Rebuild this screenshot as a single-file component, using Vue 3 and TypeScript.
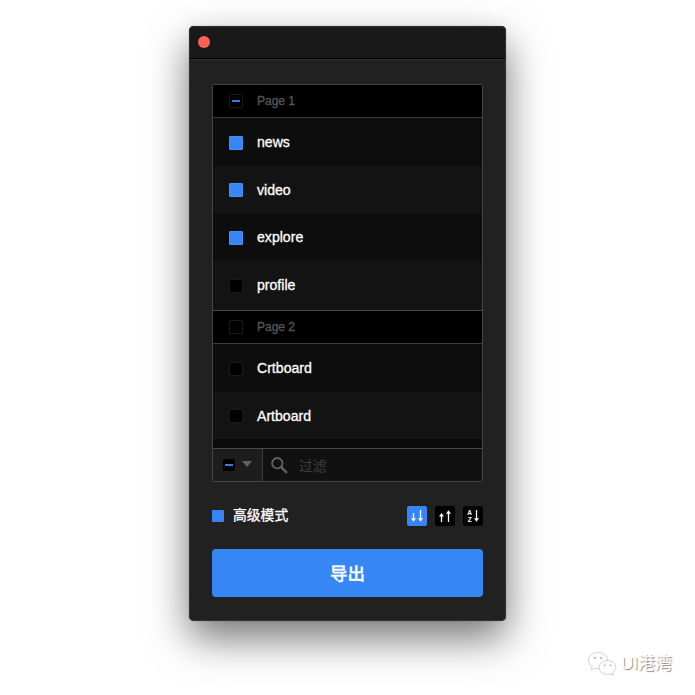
<script setup lang="ts">
import { ref } from 'vue'

type CheckState = 'on' | 'off' | 'mixed'
interface Item { name: string; state: CheckState }
interface Group { name: string; state: CheckState; items: Item[] }

const groups = ref<Group[]>([
  {
    name: 'Page 1',
    state: 'mixed',
    items: [
      { name: 'news', state: 'on' },
      { name: 'video', state: 'on' },
      { name: 'explore', state: 'on' },
      { name: 'profile', state: 'off' },
    ],
  },
  {
    name: 'Page 2',
    state: 'off',
    items: [
      { name: 'Crtboard', state: 'off' },
      { name: 'Artboard', state: 'off' },
    ],
  },
])

const sort = ref<'down' | 'up' | 'az'>('down')

function toggle(item: Item) {
  item.state = item.state === 'on' ? 'off' : 'on'
}
</script>

<template>
  <main class="stage">
    <section class="window">
      <header class="titlebar"><span class="close"></span></header>
      <div class="content">
        <div class="panel">
          <div class="list">
            <div v-for="group in groups" :key="group.name" class="group">
              <div class="group-head">
                <span class="check" :class="group.state"></span>
                <span class="group-name">{{ group.name }}</span>
              </div>
              <div v-for="item in group.items" :key="item.name" class="row" @click="toggle(item)">
                <span class="check" :class="item.state"></span>
                <span class="name">{{ item.name }}</span>
              </div>
            </div>
            <div class="row-peek"></div>
          </div>
          <div class="filter">
            <div class="select-all">
              <span class="check small mixed"></span>
              <svg class="caret" width="10" height="6" viewBox="0 0 10 6"><path d="M0 0h10L5 6z" fill="#626262" /></svg>
            </div>
            <div class="search">
              <svg class="lens" width="17" height="17" viewBox="0 0 17 17" fill="none" stroke="#626262">
                <circle cx="6.300" cy="6.200" r="5.200" stroke-width="1.800" />
                <path d="M10 9.900l6 6" stroke-width="2.200" />
              </svg>
              <span class="placeholder">过滤</span>
            </div>
          </div>
        </div>
        <div class="options">
          <span class="mode-check"></span>
          <span class="mode">高级模式</span>
          <div class="sorts">
            <button class="sort" :class="{ active: sort === 'down' }" @click="sort = 'down'">
              <svg width="20" height="20" viewBox="0 0 20 20" fill="none" stroke="#fff" stroke-width="1.3">
                <path d="M6.500 7v7M13.500 4v10" />
                <path d="M4 12.300h5l-2.500 3.500zM11 12.300h5l-2.500 3.500z" fill="#fff" stroke="none" />
              </svg>
            </button>
            <button class="sort" :class="{ active: sort === 'up' }" @click="sort = 'up'">
              <svg width="20" height="20" viewBox="0 0 20 20" fill="none" stroke="#fff" stroke-width="1.3">
                <path d="M6.500 9v7M13.500 6v10" />
                <path d="M4 10.500h5l-2.500-3.500zM11 7.700h5l-2.500-3.500z" fill="#fff" stroke="none" />
              </svg>
            </button>
            <button class="sort" :class="{ active: sort === 'az' }" @click="sort = 'az'">
              <svg width="20" height="20" viewBox="0 0 20 20" fill="none" stroke="#fff" stroke-width="1.3">
                <text class="az" x="6.700" y="9.200">A</text>
                <text class="az" x="6.700" y="15.600">Z</text>
                <path d="M13.500 4v10" />
                <path d="M11 12.300h5l-2.500 3.500z" fill="#fff" stroke="none" />
              </svg>
            </button>
          </div>
        </div>
        <button class="export">导出</button>
      </div>
    </section>
    <div class="watermark">
      <svg width="31" height="26" viewBox="0 0 31 26">
        <g fill="#fff" stroke="#b4b4b4" stroke-width=".6">
          <path d="M11 1.500C5.500 1.500 1.500 5 1.500 9.500c0 2.700 1.400 4.900 3.700 6.400L4.200 19l3.700-1.900c1 .3 2 .4 3.100.4 5.500 0 9.800-3.500 9.800-8S16.500 1.500 11 1.500z" />
          <path d="M20.500 9.500c-4.800 0-8.400 3-8.400 6.900s3.600 6.900 8.400 6.900c1 0 1.900-.1 2.700-.4l3.100 1.600-.8-2.700c1.900-1.300 3.300-3.200 3.300-5.400 0-3.900-3.600-6.900-8.300-6.900z" />
        </g>
        <g fill="#aaa">
          <circle cx="7.800" cy="7" r="1" /><circle cx="14" cy="7" r="1" />
          <circle cx="17.800" cy="14.300" r=".9" /><circle cx="23.300" cy="14.300" r=".9" />
        </g>
      </svg>
      <span>UI港湾</span>
    </div>
  </main>
</template>

<style>
body {
  margin: 0;
  background: #fff;
}
</style>

<style scoped>
.stage {
  position: relative;
  box-sizing: border-box;
  width: 695px;
  height: 695px;
  padding: 26px 0 0 189px;
  overflow: hidden;
  background: #fff;
  font-family: "Liberation Sans", "Noto Sans CJK SC", sans-serif;
}
.window {
  box-sizing: border-box;
  width: 317px;
  height: 595px;
  border-radius: 5px;
  background: #212121;
  box-shadow: 0 0 1px rgba(0, 0, 0, .7), 0 17px 40px rgba(0, 0, 0, .55), inset 0 0 0 1px #353535;
}
.titlebar {
  display: flex;
  align-items: center;
  box-sizing: border-box;
  height: 33px;
  padding: 0 8px 1px;
  border: 1px solid #303030;
  border-bottom-color: #050505;
  border-radius: 5px 5px 0 0;
  background: #191919;
  box-shadow: 0 1px 0 #303030;
}
.close {
  width: 12px;
  height: 12px;
  border-radius: 50%;
  background: #fe5f57;
}
.content {
  display: flex;
  flex-direction: column;
  padding: 25px 23px 0;
}
.panel {
  box-sizing: border-box;
  height: 398px;
  border: 1px solid #444;
  border-radius: 2px;
  overflow: hidden;
  background: #111;
}
.list {
  height: 363px;
  overflow: hidden;
}
.group-head,
.row {
  display: flex;
  align-items: center;
  box-sizing: border-box;
  gap: 14px;
  padding-left: 16px;
}
.group-head {
  height: 33px;
  border-bottom: 1px solid #3c3c3c;
  background: #000;
}
.group + .group .group-head {
  height: 34px;
  border-top: 1px solid #4a4a4a;
}
.row {
  height: 47.6px;
  background: #0d0d0d;
  padding-top: 2px;
}
.row:nth-child(odd) {
  background: #131313;
}
.row-peek {
  height: 10px;
  background: #0b0b0b;
}
.group:first-child .row:last-child {
  height: 49.2px;
  padding-bottom: 1.6px;
}
.name {
  color: #fff;
  font-size: 14.1px;
  line-height: 18px;
  margin-top: -1px;
  -webkit-text-stroke: .3px #fff;
}
.group-name {
  color: #555;
  font-size: 12px;
  line-height: 18px;
  -webkit-text-stroke: .35px #555;
}
.check {
  display: flex;
  align-items: center;
  justify-content: center;
  box-sizing: border-box;
  width: 14px;
  height: 14px;
  border: 1px solid #1a1a1a;
  border-radius: 1px;
  background: #000;
}
.check.on {
  border-color: #4a8fef;
  background: #3686f7;
}
.check.mixed::after {
  content: "";
  width: 8px;
  height: 2px;
  background: #3c7ce0;
}
.check.small {
  width: 12px;
  height: 12px;
  border-color: #000;
}
.filter {
  display: flex;
  height: 33px;
  box-sizing: border-box;
  border-top: 1px solid #4a4a4a;
}
.select-all {
  display: flex;
  align-items: center;
  box-sizing: border-box;
  gap: 7px;
  width: 50px;
  padding-left: 10px;
  border-right: 1px solid #3c3c3c;
  background: #1d1d1d;
}
.caret {
  margin-top: -3px;
}
.search {
  display: flex;
  align-items: center;
  flex: 1;
  gap: 11px;
  padding-left: 8px;
}
.placeholder {
  color: #3e3e3e;
  font-size: 13.7px;
  line-height: 20px;
  margin-top: 4px;
}
.options {
  display: flex;
  align-items: center;
  height: 20px;
  margin-top: 24px;
}
.mode-check {
  width: 12px;
  height: 12px;
  border-radius: 1px;
  background: #3686f7;
}
.mode {
  margin-left: 9px;
  color: #fff;
  font-size: 13.8px;
  line-height: 20px;
  -webkit-text-stroke: .3px #fff;
}
.sorts {
  display: flex;
  gap: 8px;
  margin-left: auto;
}
.sort {
  width: 20px;
  height: 20px;
  padding: 0;
  border: 0;
  border-radius: 2px;
  background: #000;
}
.sort.active {
  background: #3686f7;
}
.sort svg {
  display: block;
}
.az {
  fill: #fff;
  stroke: none;
  font: bold 6.5px "Liberation Sans", sans-serif;
  text-anchor: middle;
}
.export {
  height: 48px;
  margin-top: 23px;
  padding: 0;
  border: 0;
  border-radius: 4px;
  background: #3686f5;
  color: #fff;
  font: 500 17.5px/48px "Noto Sans CJK SC", sans-serif;
  -webkit-text-stroke: .3px #fff;
}
.watermark {
  position: absolute;
  left: 587px;
  top: 651px;
  display: flex;
  align-items: center;
  gap: 3px;
  color: #fff;
  font-size: 17px;
  line-height: 26px;
  text-shadow: 1px 1px 1px #888;
}
</style>
